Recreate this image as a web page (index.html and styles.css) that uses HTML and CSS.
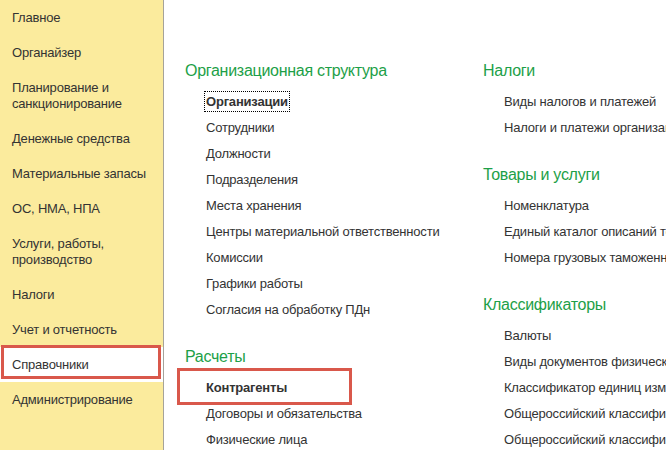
FILE: index.html
```html
<!DOCTYPE html>
<html lang="ru">
<head>
<meta charset="utf-8">
<title>Справочники</title>
<link rel="stylesheet" href="styles.css">
</head>
<body>
<div class="app">
  <nav class="sections">
    <div class="sec">Главное</div>
    <div class="sec">Органайзер</div>
    <div class="sec">Планирование и<br>санкционирование</div>
    <div class="sec">Денежные средства</div>
    <div class="sec">Материальные запасы</div>
    <div class="sec">ОС, НМА, НПА</div>
    <div class="sec">Услуги, работы,<br>производство</div>
    <div class="sec">Налоги</div>
    <div class="sec">Учет и отчетность</div>
    <div class="sec sec-active">Справочники</div>
    <div class="sec">Администрирование</div>
  </nav>
  <main class="panel">
    <div class="col col-left">
      <section class="group">
        <h2 class="group-title">Организационная структура</h2>
        <ul class="links">
          <li><span class="focused">Организации</span></li>
          <li>Сотрудники</li>
          <li>Должности</li>
          <li>Подразделения</li>
          <li>Места хранения</li>
          <li>Центры материальной ответственности</li>
          <li>Комиссии</li>
          <li>Графики работы</li>
          <li>Согласия на обработку ПДн</li>
        </ul>
      </section>
      <section class="group">
        <h2 class="group-title">Расчеты</h2>
        <ul class="links">
          <li class="marked"><b>Контрагенты</b></li>
          <li>Договоры и обязательства</li>
          <li>Физические лица</li>
        </ul>
      </section>
    </div>
    <div class="col col-right">
      <section class="group">
        <h2 class="group-title">Налоги</h2>
        <ul class="links">
          <li>Виды налогов и платежей</li>
          <li>Налоги и платежи организаций</li>
        </ul>
      </section>
      <section class="group">
        <h2 class="group-title">Товары и услуги</h2>
        <ul class="links">
          <li>Номенклатура</li>
          <li>Единый каталог описаний товаров</li>
          <li>Номера грузовых таможенных деклараций</li>
        </ul>
      </section>
      <section class="group">
        <h2 class="group-title">Классификаторы</h2>
        <ul class="links">
          <li>Валюты</li>
          <li>Виды документов физических лиц</li>
          <li>Классификатор единиц измерения</li>
          <li>Общероссийский классификатор основных фондов</li>
          <li>Общероссийский классификатор продукции</li>
        </ul>
      </section>
    </div>
  </main>
</div>
</body>
</html>
```

FILE: styles.css
```css
html, body {
  margin: 0;
  padding: 0;
  background: #fff;
  overflow: hidden;
}

body {
  font-family: "Liberation Sans", Arial, sans-serif;
  font-size: 13px;
  letter-spacing: -0.2px;
  color: #333;
}

.app {
  display: flex;
  width: 666px;
  height: 450px;
}

/* left section bar */
.sections {
  flex: 0 0 163px;
  background: #fbeb9d;
  border-right: 1px solid #a6a39a;
}

.sec {
  position: relative;
  padding: 10px 12px 9px;
  line-height: 16px;
  color: #333;
  white-space: nowrap;
}

.sec-active {
  background: #fff;
}

.sec-active::after {
  content: "";
  position: absolute;
  left: 1px;
  right: 2px;
  top: -2px;
  bottom: 3px;
  border: 3px solid #d9584b;
}

/* content panel */
.panel {
  flex: 1;
  display: flex;
  padding: 61px 0 0 21px;
  min-width: 0;
}

.col-left {
  flex: 0 0 298px;
}

.col-right {
  flex: 1;
  min-width: 0;
  white-space: nowrap;
}

.group + .group {
  margin-top: 24px;
}

.group-title {
  margin: 0 0 8px;
  font-size: 16px;
  letter-spacing: -0.28px;
  line-height: 20px;
  font-weight: normal;
  color: #1d9f48;
}

.links {
  list-style: none;
  margin: 0;
  padding: 0 0 0 21px;
}

.links li {
  position: relative;
  line-height: 26px;
  height: 26px;
  white-space: nowrap;
}

.focused {
  font-weight: bold;
  outline: 1px dotted #000;
  outline-offset: 0;
  padding: 2px 1px;
  margin-left: -1px;
}

.marked::after {
  content: "";
  position: absolute;
  left: -29px;
  top: -7px;
  width: 175px;
  height: 37px;
  box-sizing: border-box;
  border: 3px solid #d9584b;
}
```
